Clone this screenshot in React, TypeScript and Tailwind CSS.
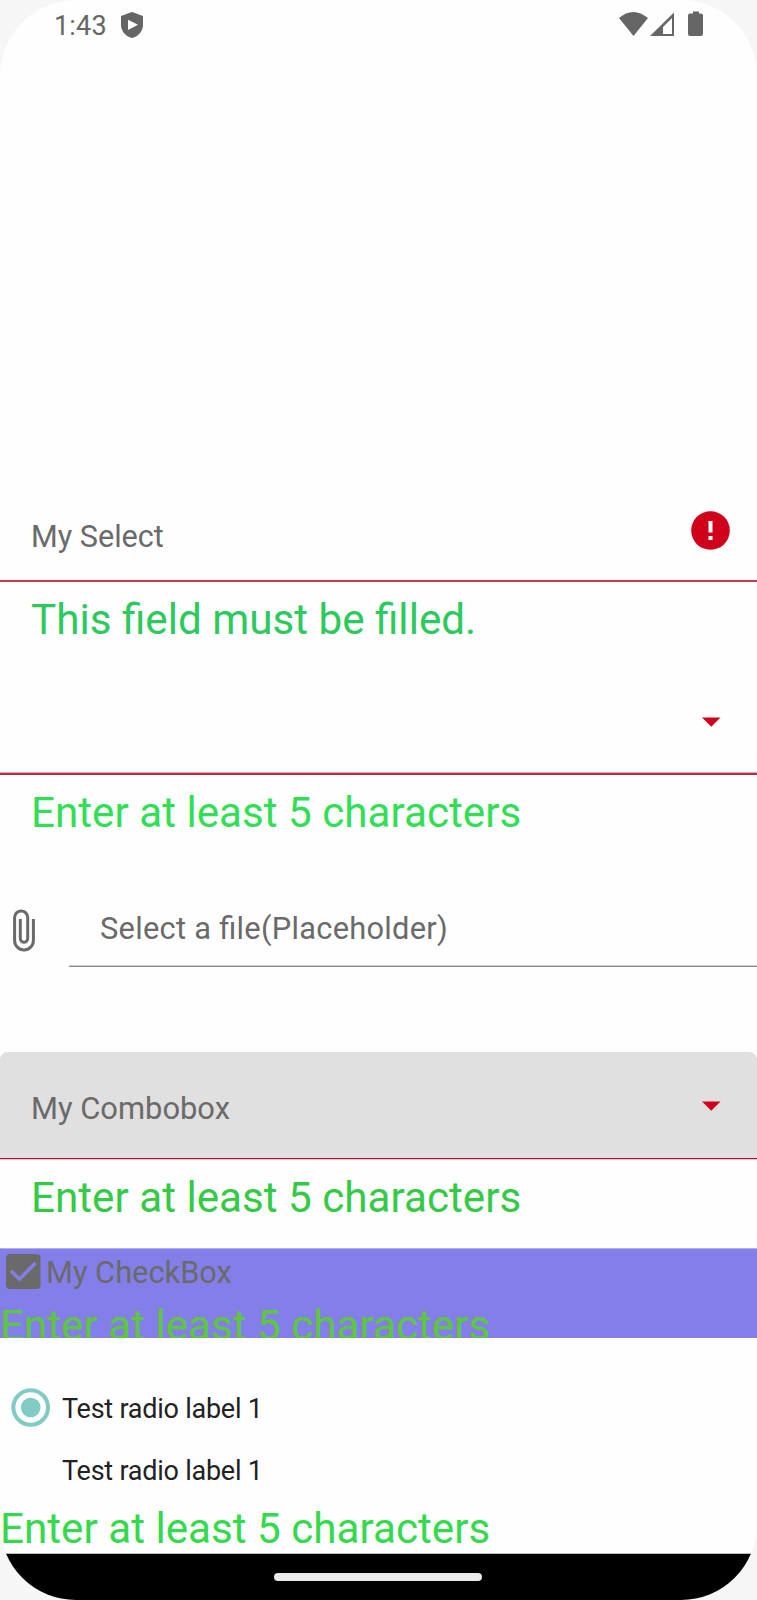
import type { ReactNode } from "react";

function StatusBar() {
  return (
    <header className="flex h-12 items-start justify-between pl-[54px] pr-[54px] text-[#666666]">
      <div className="flex items-start">
        <span className="mt-[3px] w-[67px] text-[27px] leading-[47px] tracking-[0.2px]">1:43</span>
        <svg className="mt-[11px]" width="22" height="28" viewBox="0 0 22 28" fill="currentColor">
          <path
            fillRule="evenodd"
            d="M11 1 22 5V14C22 20 17.500 25.500 11 27C4.500 25.500 0 20 0 14V5ZM7 8.700V19L17 13.800Z"
          />
        </svg>
      </div>
      <svg className="mt-[11px]" width="84" height="26" viewBox="0 0 84 26" fill="currentColor">
        <path d="M0 7Q14-5 29 7L14.500 25Z" />
        <path fillRule="evenodd" d="M55 1.500V25H31ZM53 7 44 16V23H53Z" />
        <path d="M74 .5H80V2.500H82Q84 2.500 84 4.500V23Q84 25 82 25H71Q69 25 69 23V4.500Q69 2.500 71 2.500H74Z" />
      </svg>
    </header>
  );
}

function Message({ children, className }: { children: ReactNode; className: string }) {
  return <p className={"whitespace-nowrap text-[42.2px] leading-[50px] " + className}>{children}</p>;
}

function Caret() {
  return (
    <svg width="19" height="10" viewBox="0 0 19 10" fill="#d0021b">
      <path d="M0 0.400H18.500L9.250 9.700Z" />
    </svg>
  );
}

export default function App() {
  return (
    <div className="h-[1600px] w-[757px] overflow-hidden bg-[#f6f6f6] font-['Roboto',sans-serif]">
      <div className="flex h-full flex-col overflow-hidden rounded-[76px] bg-[#fefefe] text-[#6a6a6a]">
        <StatusBar />

        <section className="mt-[452px] h-[185px]">
          <div className="flex h-[82px] items-start justify-between border-b-2 border-[#c83a4b] pl-[31px] pr-[27px]">
            <span className="mt-[19px] text-[30.6px] leading-[36px]">My Select</span>
            <svg className="mt-[11px]" width="39" height="39" viewBox="0 0 39 39">
              <circle cx="19.500" cy="19.500" r="19.300" fill="#d0021b" />
              <path d="M17.500 10H21.500V21.500H17.500ZM17.500 25H21.500V29H17.500Z" fill="white" />
            </svg>
          </div>
          <Message className="mt-[13px] pl-[31px] text-[#2cc95c]">This field must be filled.</Message>
        </section>

        <section className="h-[215px] pt-[31px]">
          <div className="flex h-[59px] items-start justify-end border-b-2 border-[#b52f42] pr-[36px] shadow-[inset_0_-1px_#f3a5b0]">
            <span className="mt-px">
              <Caret />
            </span>
          </div>
          <Message className="mt-[13px] pl-[31px] text-[#32de55]">Enter at least 5 characters</Message>
        </section>

        <section className="flex h-[67px] items-start">
          <svg className="ml-[13px] mt-[9px]" width="22" height="43" viewBox="0 0 22 43" fill="none" stroke="currentColor" strokeWidth="3">
            <path d="M20.400 10V31.500A9.400 9.400 0 0 1 1.600 31.500V8.500A6.500 6.500 0 0 1 14.700 8.500V29.500A3.700 3.700 0 0 1 7.300 29.500V10" />
          </svg>
          <div className="ml-[34px] h-[67px] flex-1 border-b border-[#888888] pl-[31px] pt-[11px] shadow-[inset_0_-1px_#d2d2d2]">
            <span className="block whitespace-nowrap text-[30.8px] leading-[36px] tracking-[0.28px] [font-feature-settings:'liga'_1]">
              Select a file(Placeholder)
            </span>
          </div>
        </section>

        <section className="mt-[85px] h-[196px]">
          <div className="flex h-[107px] items-start justify-between rounded-t-[8px] border-b border-[#b30f25] bg-[#e0e0e0] pl-[31px] pr-[36px] shadow-[0_1px_#f8c4cc]">
            <span className="mt-[39px] text-[30.9px] leading-[36px]">My Combobox</span>
            <span className="mt-[49px]">
              <Caret />
            </span>
          </div>
          <Message className="mt-[14px] pl-[31px] text-[#35ca45]">Enter at least 5 characters</Message>
        </section>

        <section className="h-[90px] overflow-hidden bg-[#847fe8] shadow-[inset_0_1px_#b2aef1]">
          <div className="flex h-[50px] items-start pl-[6px]">
            <svg className="mt-[6px]" width="35" height="35" viewBox="0 0 35 35">
              <rect width="34.500" height="35" rx="4" fill="#6a6a6a" />
              <path d="M5 17 13.500 25 29.500 9" fill="none" stroke="#847fe8" strokeWidth="3.500" />
            </svg>
            <span className="ml-[5px] mt-[7px] text-[30.8px] leading-[36px]">My CheckBox</span>
          </div>
          <Message className="mt-[3px] text-[#5cc83a]">Enter at least 5 characters</Message>
        </section>

        <section className="h-[216px] pt-[50px] text-[27px] leading-[32px] tracking-[-0.24px] text-[#222222]">
          <div className="flex h-[62px] items-start pl-[11px]">
            <svg width="39" height="39" viewBox="0 0 39 39" fill="none">
              <circle cx="19.700" cy="19.500" r="17.300" stroke="#80cbc4" strokeWidth="4" />
              <circle cx="19.700" cy="19.500" r="9.800" fill="#80cbc4" />
            </svg>
            <span className="ml-[12px] mt-[5px]">Test radio label 1</span>
          </div>
          <div className="flex h-[54px] items-start pl-[62px] pt-[5px]">Test radio label 1</div>
          <Message className="tracking-normal text-[#35d94c]">Enter at least 5 characters</Message>
        </section>

        <footer className="flex h-[46px] justify-center bg-black pr-px pt-[19px] shadow-[0_-1px_#bbbbbb]">
          <div className="h-[8px] w-[208px] rounded-full bg-[#ebebeb]" />
        </footer>
      </div>
    </div>
  );
}
